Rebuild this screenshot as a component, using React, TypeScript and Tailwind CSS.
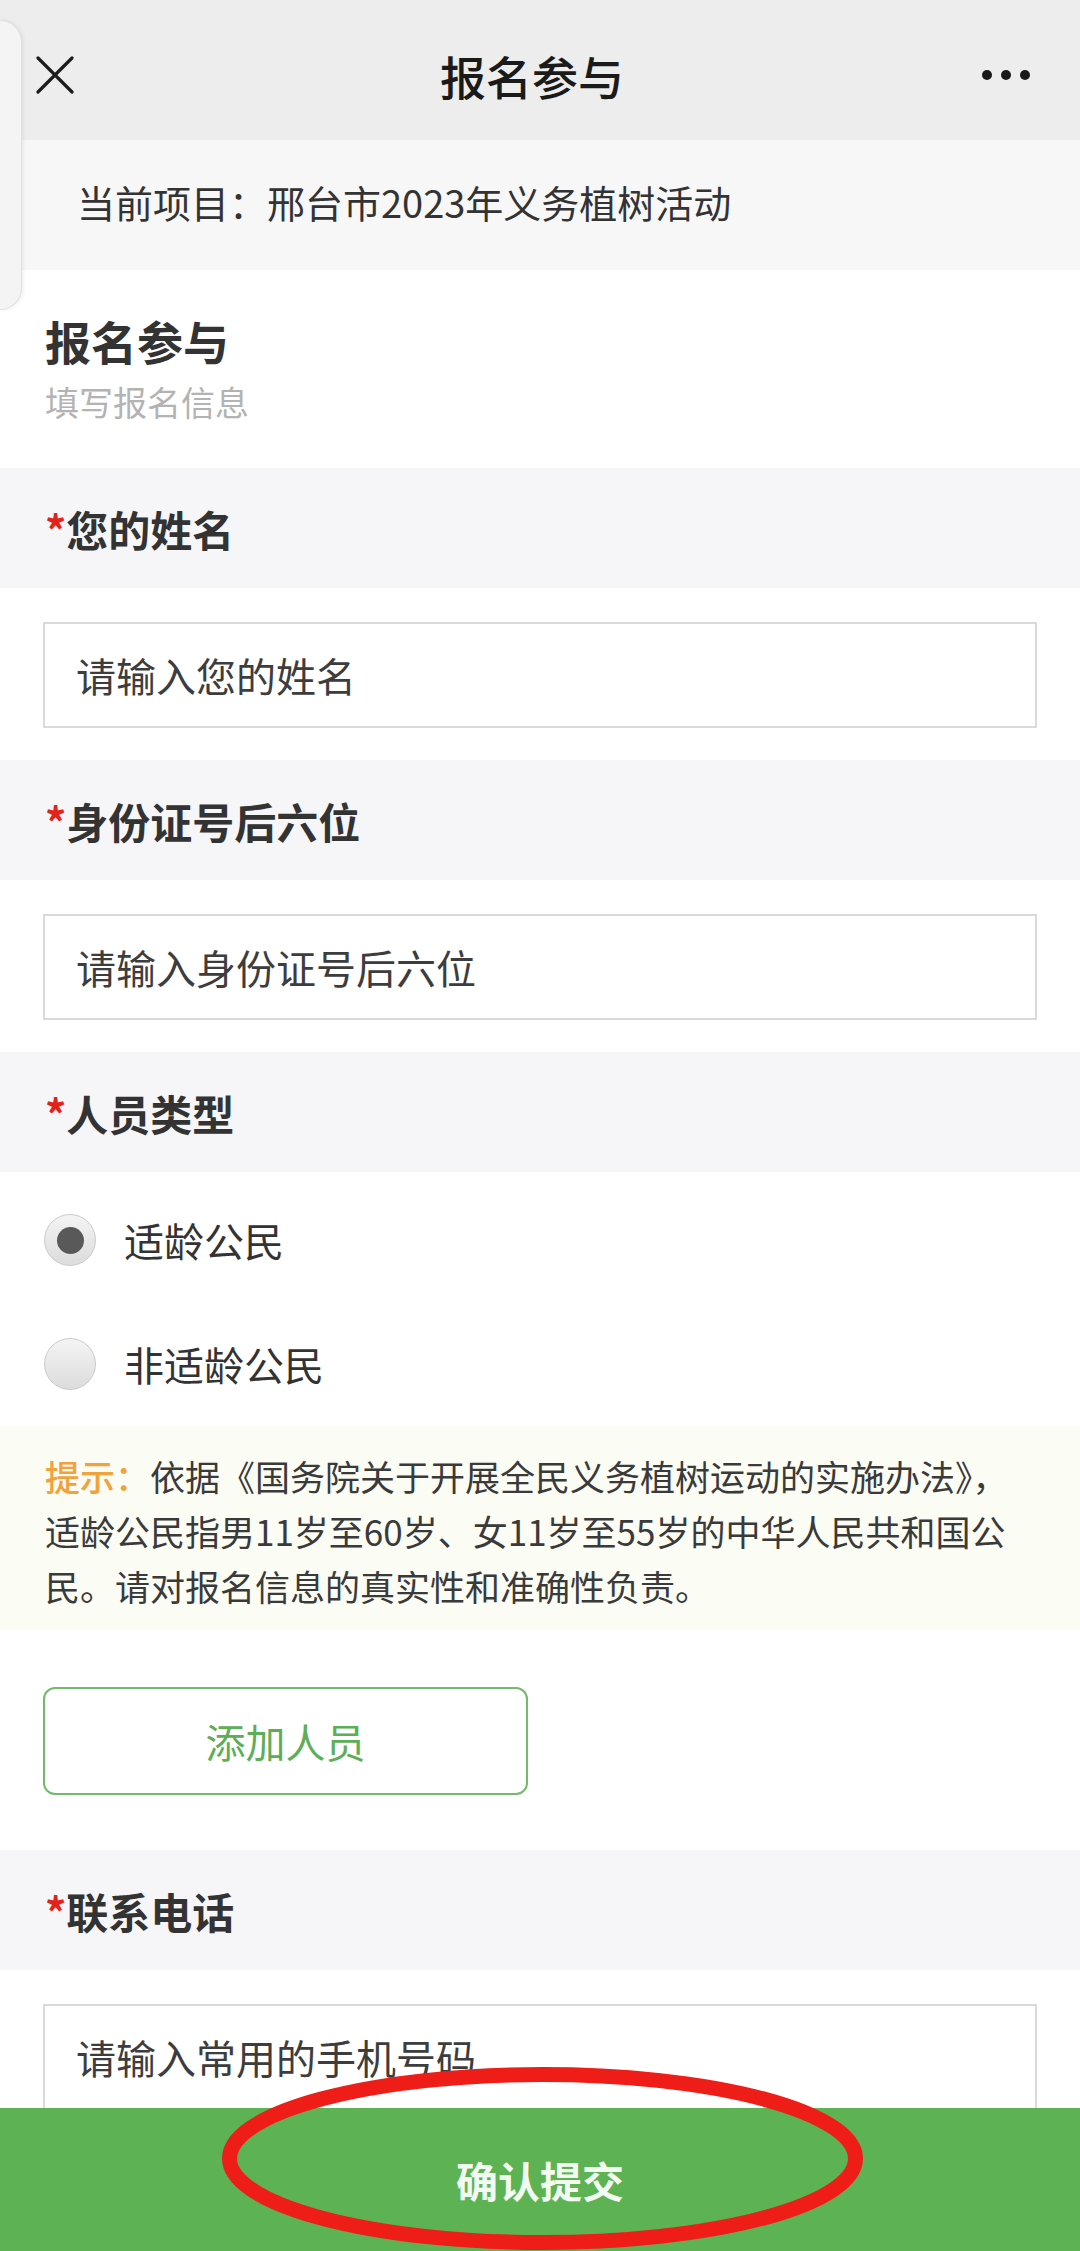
import { type FC } from "react";

interface IFieldProps {
  label: string;
  placeholder: string;
}

const Label: FC<{ text: string }> = ({ text }) => (
  <div className="flex h-[120px] shrink-0 items-center bg-[#f6f6f9] px-[45px] text-[42px] font-bold text-[#333]">
    <span className="text-[#e2231a]">*</span>
    <span>{text}</span>
  </div>
);

const Field: FC<IFieldProps> = ({ label, placeholder }) => (
  <div className="flex shrink-0 flex-col">
    <Label text={label} />
    <div className="shrink-0 bg-white px-[43px] pt-[34px] pb-[32px]">
      <div className="flex h-[106px] items-center border-2 border-[#dadada] px-[31px] text-[40px] text-[#3d3d3d]">
        {placeholder}
      </div>
    </div>
  </div>
);

const Radio: FC<{ label: string; checked?: boolean }> = ({ label, checked }) => (
  <div className="flex h-[124px] shrink-0 items-center gap-[28px] px-[44px]">
    <div className="flex h-[52px] w-[52px] items-center justify-center rounded-full border border-[#cbcbcb] bg-linear-to-b from-[#f4f4f4] to-[#dcdcdc]">
      {checked && <div className="h-[27px] w-[27px] rounded-full bg-[#595959]" />}
    </div>
    <span className="text-[40px] text-[#333]">{label}</span>
  </div>
);

const App: FC = () => {
  return (
    <div className="relative flex h-[2251px] w-[1080px] flex-col overflow-hidden bg-white font-['Noto_Sans_CJK_SC',sans-serif]">
      {/* top bar */}
      <header className="grid h-[140px] shrink-0 grid-cols-[1fr_auto_1fr] items-center bg-[#ededed] px-[36px] pt-[10px]">
        <svg width="38" height="38" viewBox="0 0 38 38" className="text-[#1c1c1c]">
          <path d="M2 2 L36 36 M36 2 L2 36" stroke="currentColor" strokeWidth="3.2" strokeLinecap="round" />
        </svg>
        <h1 className="mr-[16px] text-[46px] font-medium text-[#1a1a1a]">报名参与</h1>
        <div className="flex items-center justify-end gap-[9px] pr-[14px]">
          <span className="h-[10px] w-[10px] rounded-full bg-[#1a1a1a]" />
          <span className="h-[10px] w-[10px] rounded-full bg-[#1a1a1a]" />
          <span className="h-[10px] w-[10px] rounded-full bg-[#1a1a1a]" />
        </div>
      </header>

      <main className="flex min-h-0 flex-1 flex-col overflow-hidden">
        <div className="flex h-[130px] shrink-0 items-center bg-[#f7f7f7] px-[77px] pb-[8px] text-[38px] text-[#333]">
          当前项目：邢台市2023年义务植树活动
        </div>

        <section className="flex shrink-0 flex-col gap-[12px] bg-white px-[45px] pt-[42px] pb-[44px]">
          <h2 className="text-[46px] leading-[56px] font-bold text-[#333]">报名参与</h2>
          <p className="text-[34px] leading-[44px] text-[#b3b3b3]">填写报名信息</p>
        </section>

        <Field label="您的姓名" placeholder="请输入您的姓名" />
        <Field label="身份证号后六位" placeholder="请输入身份证号后六位" />

        <Label text="人员类型" />
        <div className="flex shrink-0 flex-col bg-white pt-[6px]">
          <Radio label="适龄公民" checked />
          <Radio label="非适龄公民" />
        </div>

        <div className="flex shrink-0 flex-col bg-[#fbfcf4] px-[45px] pt-[22px] pb-[17px] text-[35px] leading-[55px] whitespace-nowrap text-[#3a3a3a]">
          <p>
            <span className="font-medium text-[#f2a23a]">提示：</span>依据《国务院关于开展全民义务植树运动的实施办法》，
          </p>
          <p>适龄公民指男11岁至60岁、女11岁至55岁的中华人民共和国公</p>
          <p>民。请对报名信息的真实性和准确性负责。</p>
        </div>

        <div className="shrink-0 bg-white px-[43px] pt-[57px] pb-[55px]">
          <button className="flex h-[108px] w-[485px] items-center justify-center rounded-[12px] border-2 border-[#74b96e] text-[40px] text-[#5dae57]">
            添加人员
          </button>
        </div>

        <Field label="联系电话" placeholder="请输入常用的手机号码" />
      </main>

      <footer className="flex h-[143px] shrink-0 items-center justify-center bg-[#5db354] text-[42px] font-bold text-[#f3faf1]">
        确认提交
      </footer>

      {/* red annotation ring */}
      <svg
        className="pointer-events-none absolute top-[2066px] left-[221px]"
        width="643"
        height="185"
        viewBox="0 0 643 185"
      >
        <ellipse cx="321.5" cy="92.5" rx="313" ry="84" fill="none" stroke="#ee1d17" strokeWidth="15" />
      </svg>

      {/* side drawer edge */}
      <div className="absolute top-[20px] left-0 h-[290px] w-[22px] rounded-r-[22px] border border-l-0 border-[#e0e0e0] bg-[#f4f4f4] shadow-[1px_0_4px_rgba(0,0,0,0.08)]" />
    </div>
  );
};

export default App;
